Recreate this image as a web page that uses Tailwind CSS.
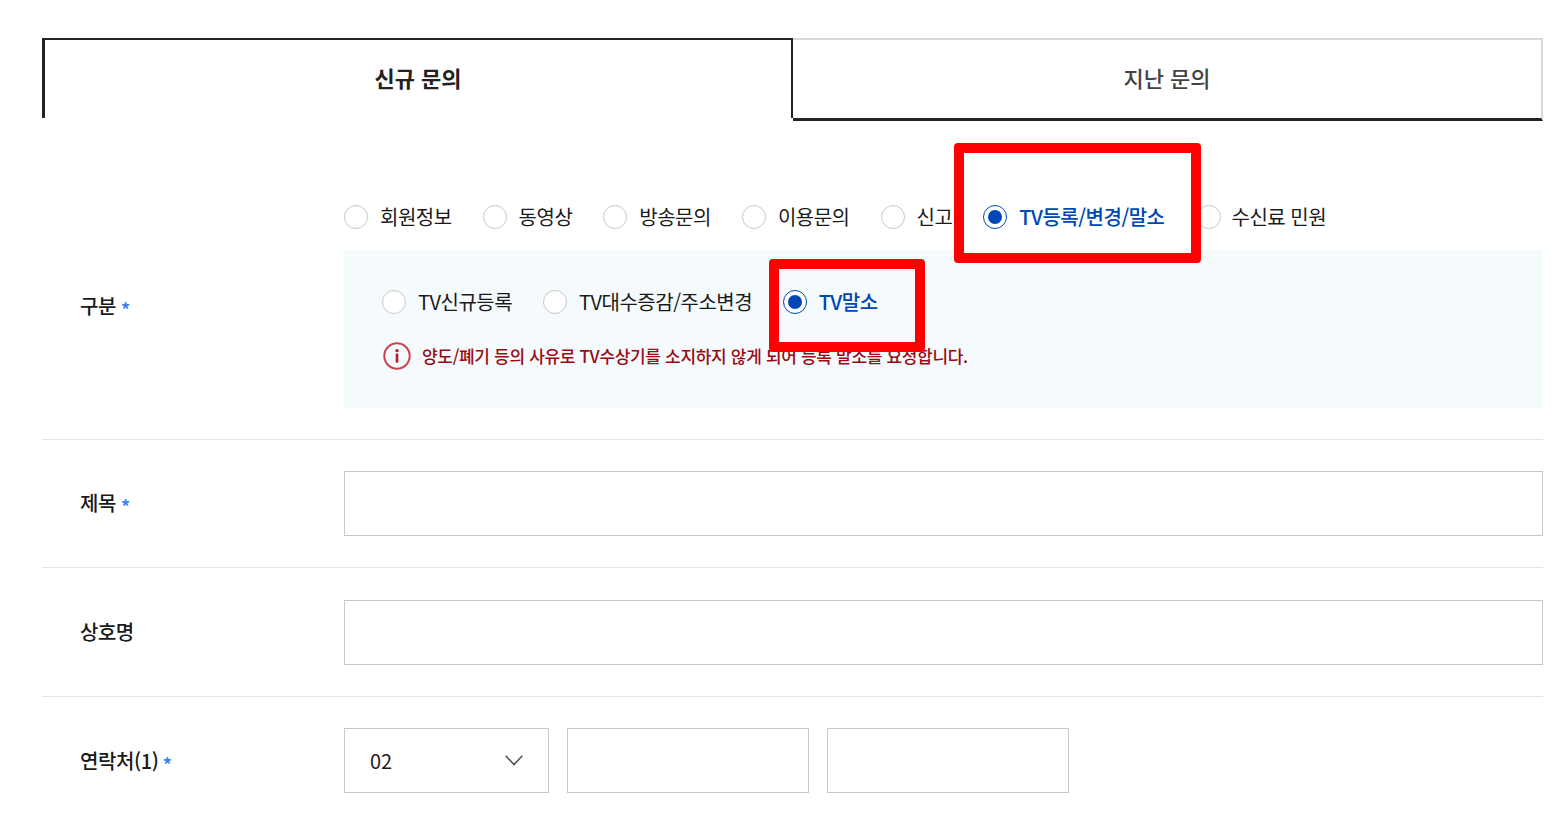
<!DOCTYPE html>
<html lang="ko">
  <head>
    <meta charset="UTF-8" />
    <title>문의</title>
    <script src="https://cdn.jsdelivr.net/npm/@tailwindcss/browser@4"></script>
  </head>
  <body class="bg-white overflow-hidden font-['Noto_Sans_CJK_KR','Noto_Sans',sans-serif] text-[#1a1a1a]">
    <div class="relative w-[1563px] h-[818px] pl-[42px] pr-[20px] pt-[38px]">
      <!-- Tabs -->
      <div class="flex h-[83px]">
        <div class="w-[751px] h-[80px] border-t-2 border-r-2 border-l-[3px] border-[#222] flex items-center justify-center pb-[4px] text-[22px] font-bold text-[#222]">신규 문의</div>
        <div class="flex-1 border-t-2 border-r-2 border-t-[#d8d8d8] border-r-[#d8d8d8] border-b-[3px] border-b-[#222] flex items-center justify-center text-[22px] font-medium text-[#444] pb-[3px]">지난 문의</div>
      </div>

      <!-- 구분 -->
      <div class="flex border-b border-[#e5e5e5] h-[319px]">
        <div class="w-[302px] pl-[38px] pt-[170px] text-[20px] font-medium tracking-[-0.5px] leading-[30px]">구분 <span class="text-[#3b82f6] text-[18px] font-bold align-[-3px]">*</span></div>
        <div class="flex-1 pt-[84px]">
          <div class="flex items-center h-[24px] text-[20px] tracking-[-0.5px]">
            <span class="w-[24px] h-[24px] rounded-full border border-[#c8c8c8] bg-white"></span>
            <span class="ml-[12px] mr-[31px]">회원정보</span>
            <span class="w-[24px] h-[24px] rounded-full border border-[#c8c8c8] bg-white"></span>
            <span class="ml-[12px] mr-[31px]">동영상</span>
            <span class="w-[24px] h-[24px] rounded-full border border-[#c8c8c8] bg-white"></span>
            <span class="ml-[12px] mr-[31px]">방송문의</span>
            <span class="w-[24px] h-[24px] rounded-full border border-[#c8c8c8] bg-white"></span>
            <span class="ml-[12px] mr-[31px]">이용문의</span>
            <span class="w-[24px] h-[24px] rounded-full border border-[#c8c8c8] bg-white"></span>
            <span class="ml-[12px] mr-[31px]">신고</span>
            <span class="w-[24px] h-[24px] rounded-full border border-[#0047b6] bg-white flex items-center justify-center"><span class="w-[14px] h-[14px] rounded-full bg-[#0047b6]"></span></span>
            <span class="ml-[12px] mr-[32px] font-medium text-[#0047b6]">TV등록/변경/말소</span>
            <span class="w-[24px] h-[24px] rounded-full border border-[#c8c8c8] bg-white"></span>
            <span class="ml-[11px]">수신료 민원</span>
          </div>
          <div class="mt-[21px] h-[158px] bg-[#f5fafd] pl-[38px] pt-[40px]">
            <div class="flex items-center h-[24px] text-[20px] tracking-[-0.5px]">
              <span class="w-[24px] h-[24px] rounded-full border border-[#c8c8c8] bg-white"></span>
              <span class="ml-[12px] mr-[31px]">TV신규등록</span>
              <span class="w-[24px] h-[24px] rounded-full border border-[#c8c8c8] bg-white"></span>
              <span class="ml-[12px] mr-[31px]">TV대수증감/주소변경</span>
              <span class="w-[24px] h-[24px] rounded-full border border-[#0047b6] bg-white flex items-center justify-center"><span class="w-[14px] h-[14px] rounded-full bg-[#0047b6]"></span></span>
              <span class="ml-[11.5px] font-medium text-[#0047b6]">TV말소</span>
            </div>
            <div class="flex items-center mt-[28px] ml-[1px] h-[28px] text-[17px] font-medium tracking-[-0.32px] text-[#9b0a14]">
              <svg class="w-[28px] h-[28px] shrink-0" viewBox="0 0 28 28" fill="none">
                <circle cx="14" cy="14" r="12.7" stroke="#c9444c" stroke-width="2" />
                <circle cx="14" cy="8.6" r="1.7" fill="#b0202a" />
                <rect x="12.7" y="11.6" width="2.6" height="9" fill="#b0202a" />
              </svg>
              <span class="ml-[11px]">양도/폐기 등의 사유로 TV수상기를 소지하지 않게 되어 등록 말소를 요청합니다.</span>
            </div>
          </div>
        </div>
      </div>

      <!-- 제목 -->
      <div class="flex items-center border-b border-[#e5e5e5] h-[128px]">
        <div class="w-[302px] pl-[38px] pt-[1px] text-[20px] font-medium tracking-[-0.5px]">제목 <span class="text-[#3b82f6] text-[18px] font-bold align-[-3px]">*</span></div>
        <div class="flex-1 h-[65px] border border-[#c8c8c8]"></div>
      </div>

      <!-- 상호명 -->
      <div class="flex items-center border-b border-[#e5e5e5] h-[129px]">
        <div class="w-[302px] pl-[38px] pb-[1px] text-[20px] font-medium tracking-[-0.5px]">상호명</div>
        <div class="flex-1 h-[65px] border border-[#c8c8c8]"></div>
      </div>

      <!-- 연락처 -->
      <div class="flex items-center h-[127px]">
        <div class="w-[302px] pl-[38px] pt-[3px] text-[20px] font-medium tracking-[-0.4px]">연락처(1) <span class="text-[#3b82f6] text-[18px] font-bold align-[-3px] ml-[-1px]">*</span></div>
        <div class="w-[205px] h-[65px] border border-[#c8c8c8] flex items-center justify-between pl-[25px] pr-[25px] text-[20px]">
          <span>02</span>
          <svg class="w-[18px] h-[11px]" viewBox="0 0 18 11" fill="none"><path d="M0.7 0.7 L9 9.6 L17.3 0.7" stroke="#555" stroke-width="1.6" /></svg>
        </div>
        <div class="w-[242px] h-[65px] border border-[#c8c8c8] ml-[18px]"></div>
        <div class="w-[242px] h-[65px] border border-[#c8c8c8] ml-[18px]"></div>
      </div>

      <!-- 표시 박스 -->
      <div class="absolute left-[954px] top-[143px] w-[247px] h-[120px] border-[10px] border-[#ff0000] rounded-[4px]"></div>
      <div class="absolute left-[769px] top-[259px] w-[156px] h-[93px] border-[10px] border-[#ff0000] rounded-[4px]"></div>
    </div>
  </body>
</html>
